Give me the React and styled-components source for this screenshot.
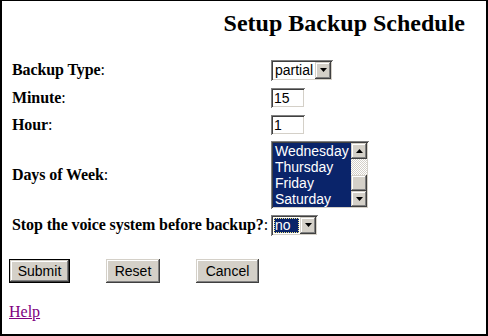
import styled, { createGlobalStyle } from 'styled-components';

const GlobalStyle = createGlobalStyle`
    html, body {
        margin: 0;
        padding: 0;
        background: white;
    }
`;

const FACE = '#d4d0c8';
const NAVY = '#0a246a';

const sunken = `
    inset 1px 1px #808080,
    inset -1px -1px #ffffff,
    inset 2px 2px #404040,
    inset -2px -2px ${FACE}
`;

const raised = `
    inset -1px -1px #404040,
    inset 1px 1px ${FACE},
    inset -2px -2px #808080,
    inset 2px 2px #ffffff
`;

const Arrow = ({ up }) => (
    <svg width="7" height="4" viewBox="0 0 7 4">
        <polygon points={up ? '3.5,0 7,4 0,4' : '0,0 7,0 3.5,4'} fill="black" />
    </svg>
);

const App = () => {
    return (
        <Frame>
            <GlobalStyle />
            <Header>
                <Title>Setup Backup Schedule</Title>
            </Header>
            <Form>
                <Row $h={28}>
                    <Label>
                        <b>Backup Type</b>:
                    </Label>
                    <SelectBox $w={62}>
                        <Value>partial</Value>
                        <ArrowBtn>
                            <Arrow />
                        </ArrowBtn>
                    </SelectBox>
                </Row>
                <Row $h={27}>
                    <Label>
                        <b>Minute</b>:
                    </Label>
                    <TextInput readOnly defaultValue="15" />
                </Row>
                <Row $h={27}>
                    <Label>
                        <b>Hour</b>:
                    </Label>
                    <TextInput readOnly defaultValue="1" />
                </Row>
                <Row $h={74}>
                    <Label>
                        <b>Days of Week</b>:
                    </Label>
                    <ListBox>
                        <Items>
                            <Item>Wednesday</Item>
                            <Item>Thursday</Item>
                            <Item>Friday</Item>
                            <Item>Saturday</Item>
                        </Items>
                        <ScrollBar>
                            <ScrollBtn>
                                <Arrow up />
                            </ScrollBtn>
                            <Track />
                            <Thumb />
                            <ScrollBtn>
                                <Arrow />
                            </ScrollBtn>
                        </ScrollBar>
                    </ListBox>
                </Row>
                <Row $h={26}>
                    <Label>
                        <b>Stop the voice system before backup?</b>:
                    </Label>
                    <SelectBox $w={47}>
                        <Value $selected>no</Value>
                        <ArrowBtn>
                            <Arrow />
                        </ArrowBtn>
                    </SelectBox>
                </Row>
            </Form>
            <Buttons>
                <Button $w={61} $default>Submit</Button>
                <Button $w={54}>Reset</Button>
                <Button $w={63}>Cancel</Button>
            </Buttons>
            <HelpLink href="#">Help</HelpLink>
        </Frame>
    );
};

export default App;

const Frame = styled.div`
    width: 488px;
    height: 336px;
    box-sizing: border-box;
    border-style: solid;
    border-color: black;
    border-width: 1px 2px 2px 2px;
    padding-left: 7px;
    display: flex;
    flex-direction: column;
    font-family: 'Liberation Serif', 'Times New Roman', serif;
    font-size: 16px;
    color: black;
`;

const Header = styled.div`
    height: 55px;
    display: flex;
    justify-content: flex-end;
    padding-right: 21px;
`;

const Title = styled.h2`
    margin: 8px 0 0 0;
    font-size: 24px;
    line-height: 28px;
    font-weight: bold;
`;

const Form = styled.div`
    display: flex;
    flex-direction: column;
`;

const Row = styled.div`
    height: ${(p) => p.$h}px;
    display: grid;
    grid-template-columns: 262px auto;
    align-items: center;
    justify-items: start;
`;

const Label = styled.div`
    padding-left: 3px;
    line-height: 18px;
    white-space: nowrap;
    letter-spacing: -0.1px;
`;

const SelectBox = styled.div`
    width: ${(p) => p.$w}px;
    height: 21px;
    box-sizing: border-box;
    padding: 2px;
    display: flex;
    background: white;
    box-shadow: ${sunken};
    font-family: 'Liberation Sans', Arial, sans-serif;
    font-size: 14px;
`;

const Value = styled.div`
    flex: 1;
    margin: 1px;
    padding-left: 1px;
    line-height: 15px;
    box-sizing: border-box;
    background: ${(p) => (p.$selected ? NAVY : 'white')};
    color: ${(p) => (p.$selected ? 'white' : 'black')};
    outline: ${(p) => (p.$selected ? '1px dotted #f0e68c' : 'none')};
    outline-offset: -1px;
`;

const ArrowBtn = styled.div`
    width: 16px;
    background: ${FACE};
    box-shadow: ${raised};
    display: flex;
    align-items: center;
    justify-content: center;
`;

const TextInput = styled.input`
    width: 34px;
    height: 20px;
    box-sizing: border-box;
    border: none;
    margin: 0;
    padding: 0 0 0 3px;
    box-shadow: ${sunken};
    font-family: 'Liberation Sans', Arial, sans-serif;
    font-size: 14px;
    color: black;
    outline: none;
`;

const ListBox = styled.div`
    width: 98px;
    height: 68px;
    box-sizing: border-box;
    padding: 2px;
    display: flex;
    background: white;
    box-shadow: ${sunken};
    font-family: 'Liberation Sans', Arial, sans-serif;
    font-size: 14px;
`;

const Items = styled.div`
    flex: 1;
    background: ${NAVY};
    overflow: hidden;
`;

const Item = styled.div`
    color: white;
    line-height: 16px;
    padding-left: 2px;
    white-space: nowrap;
`;

const ScrollBar = styled.div`
    width: 16px;
    display: flex;
    flex-direction: column;
`;

const ScrollBtn = styled.div`
    height: 16px;
    background: ${FACE};
    box-shadow: ${raised};
    display: flex;
    align-items: center;
    justify-content: center;
`;

const Track = styled.div`
    flex: 1;
    background: repeating-conic-gradient(#ffffff 0 25%, ${FACE} 0 50%) 0 0 / 2px 2px;
`;

const Thumb = styled.div`
    height: 16px;
    background: ${FACE};
    box-shadow: ${raised};
`;

const Buttons = styled.div`
    display: flex;
    gap: 36px;
    margin-top: 21px;
`;

const Button = styled.button`
    width: ${(p) => p.$w}px;
    height: 24px;
    margin: 0;
    padding: 0;
    border: ${(p) => (p.$default ? '1px solid black' : 'none')};
    box-sizing: border-box;
    background: ${FACE};
    box-shadow: ${raised};
    font-family: 'Liberation Sans', Arial, sans-serif;
    font-size: 14px;
    color: black;
    cursor: pointer;
`;

const HelpLink = styled.a`
    align-self: flex-start;
    margin-top: 20px;
    line-height: 18px;
    color: #800080;
    text-decoration: underline;
`;
